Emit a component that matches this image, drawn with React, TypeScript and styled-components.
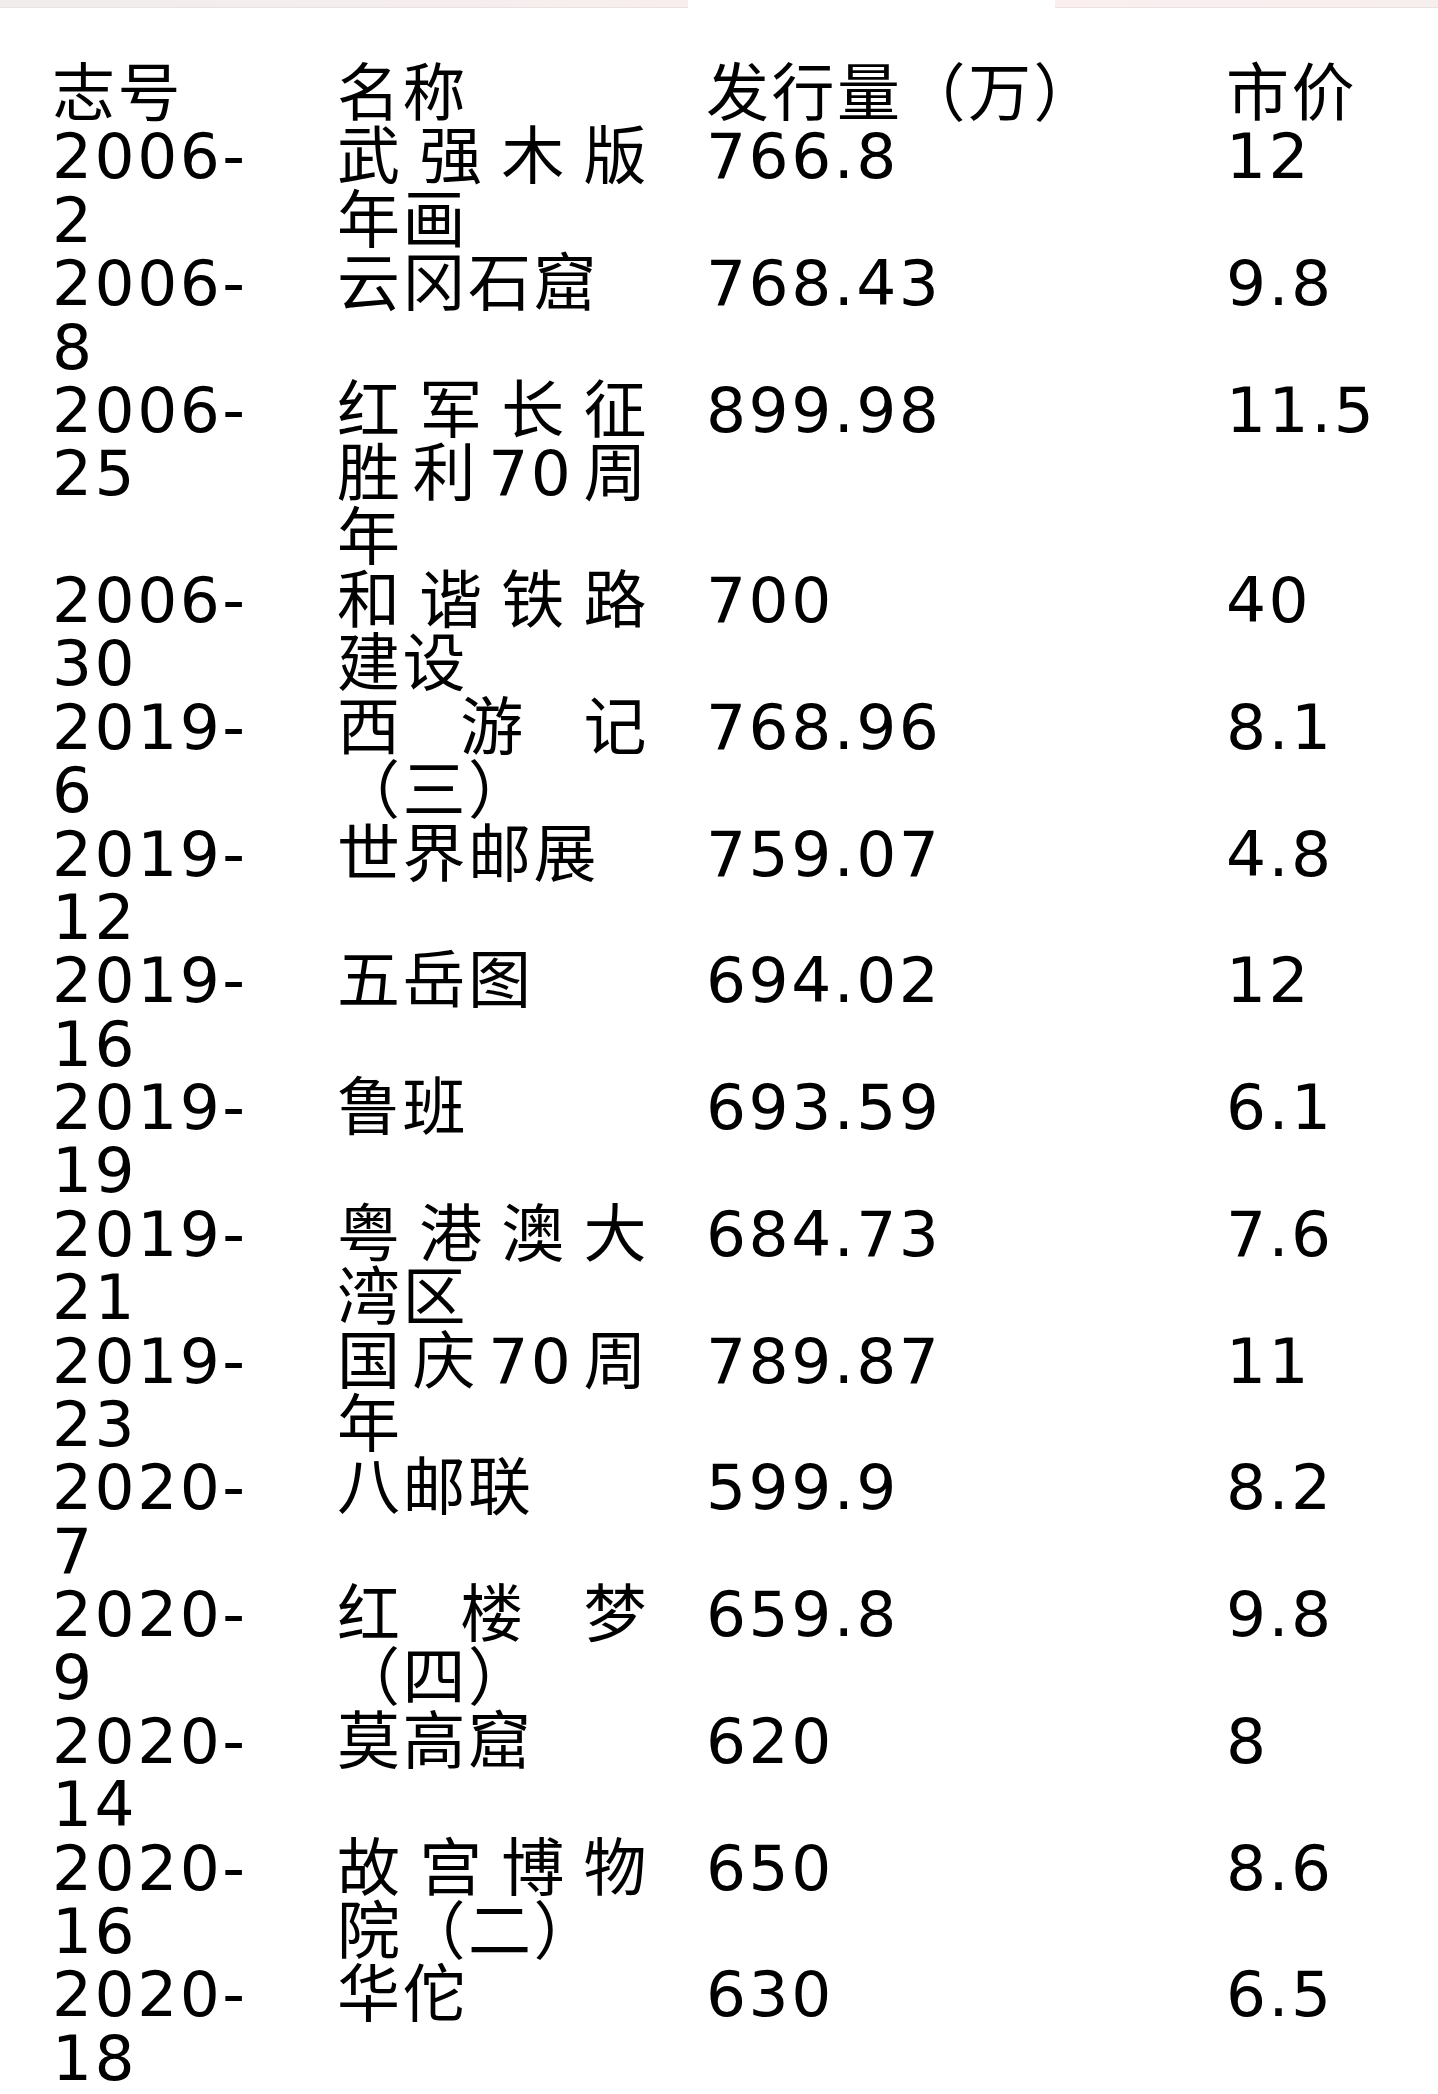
import React from 'react';
import styled, { createGlobalStyle } from 'styled-components';

const GlobalStyle = createGlobalStyle`
  html, body {
    margin: 0;
    padding: 0;
    background: #fff;
  }
  body {
    font-family: 'DejaVu Sans', 'Noto Sans CJK SC', sans-serif;
    color: #000;
  }
`;

interface Stamp {
  year: string;
  num: string;
  name: string;
  issue: string;
  price: string;
}

const stamps: Stamp[] = [
  { year: '2006', num: '2', name: '武强木版年画', issue: '766.8', price: '12' },
  { year: '2006', num: '8', name: '云冈石窟', issue: '768.43', price: '9.8' },
  { year: '2006', num: '25', name: '红军长征胜利70周年', issue: '899.98', price: '11.5' },
  { year: '2006', num: '30', name: '和谐铁路建设', issue: '700', price: '40' },
  { year: '2019', num: '6', name: '西游记（三）', issue: '768.96', price: '8.1' },
  { year: '2019', num: '12', name: '世界邮展', issue: '759.07', price: '4.8' },
  { year: '2019', num: '16', name: '五岳图', issue: '694.02', price: '12' },
  { year: '2019', num: '19', name: '鲁班', issue: '693.59', price: '6.1' },
  { year: '2019', num: '21', name: '粤港澳大湾区', issue: '684.73', price: '7.6' },
  { year: '2019', num: '23', name: '国庆70周年', issue: '789.87', price: '11' },
  { year: '2020', num: '7', name: '八邮联', issue: '599.9', price: '8.2' },
  { year: '2020', num: '9', name: '红楼梦（四）', issue: '659.8', price: '9.8' },
  { year: '2020', num: '14', name: '莫高窟', issue: '620', price: '8' },
  { year: '2020', num: '16', name: '故宫博物院（二）', issue: '650', price: '8.6' },
  { year: '2020', num: '18', name: '华佗', issue: '630', price: '6.5' }
];

// thin pink bar left over from the app header
const TopStrip = styled.div`
  display: flex;
  justify-content: space-between;
  height: 8px;
`;

const StripPiece = styled.div<{ $w: number; $from: string; $to: string }>`
  width: ${p => p.$w}px;
  height: 100%;
  background: linear-gradient(90deg, ${p => p.$from}, ${p => p.$to});
  border-bottom: 1px solid #e9e1e2;
  box-sizing: border-box;
`;

const Table = styled.div`
  display: grid;
  grid-template-columns: 285px 369px 520px 1fr;
  align-items: start;
  padding: 54px 0 0 52px;
  font-size: 63px;
  line-height: 63.37px;
  letter-spacing: 2.5px;
`;

const Cell = styled.div<{ $pad?: number }>`
  padding-right: ${p => p.$pad ?? 0}px;
`;

const NameCell = styled(Cell)`
  text-align: justify;
  text-justify: inter-character;
  line-break: strict;
`;

const App: React.FC = () => (
  <>
    <GlobalStyle />
    <TopStrip>
      <StripPiece $w={688} $from='#f1eded' $to='#f8eeee' />
      <StripPiece $w={383} $from='#fbeff0' $to='#f7eeee' />
    </TopStrip>
    <Table>
      <Cell $pad={75}>志号</Cell>
      <Cell $pad={57}>名称</Cell>
      <Cell>发行量（万）</Cell>
      <Cell>市价</Cell>
      {stamps.map(s => (
        <React.Fragment key={s.year + s.num}>
          <Cell $pad={75}>
            {s.year}-<wbr />{s.num}
          </Cell>
          <NameCell $pad={57}>{s.name}</NameCell>
          <Cell>{s.issue}</Cell>
          <Cell>{s.price}</Cell>
        </React.Fragment>
      ))}
    </Table>
  </>
);

export default App;
